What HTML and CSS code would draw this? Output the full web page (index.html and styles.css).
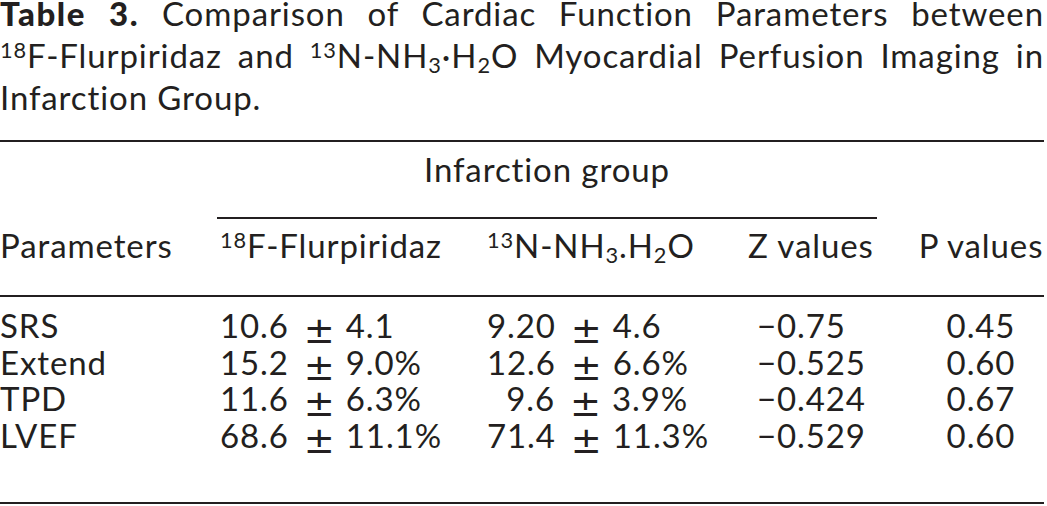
FILE: index.html
```html
<!DOCTYPE html>
<html lang="en">
<head>
    <meta charset="UTF-8" />
    <title>Table 3</title>
    <link rel="stylesheet" href="styles.css">
</head>
<body>
    <p class="caption"><b>Table 3.</b> Comparison of Cardiac Function Parameters between <span class="nowrap"><sup>18</sup>F-Flurpiridaz</span> and <span class="nowrap"><sup>13</sup>N-NH<sub>3</sub>·H<sub>2</sub>O</span> Myocardial Perfusion Imaging in Infarction Group.</p>

    <table class="data-table">
        <colgroup>
            <col class="col-param">
            <col class="col-f18">
            <col class="col-n13">
            <col class="col-z">
            <col class="col-p">
        </colgroup>
        <thead>
            <tr class="group-row">
                <th></th>
                <th colspan="3" class="group-head"><div class="group-label">Infarction group</div></th>
                <th></th>
            </tr>
            <tr class="head-row">
                <th>Parameters</th>
                <th><sup>18</sup>F-Flurpiridaz</th>
                <th><sup>13</sup>N-NH<sub>3</sub>.H<sub>2</sub>O</th>
                <th>Z values</th>
                <th class="center">P values</th>
            </tr>
        </thead>
        <tbody>
            <tr class="first">
                <td>SRS</td>
                <td><span class="mean">10.6</span><span class="pm">±</span>4.1</td>
                <td><span class="mean">9.20</span><span class="pm">±</span>4.6</td>
                <td class="z">−0.75</td>
                <td class="center">0.45</td>
            </tr>
            <tr>
                <td>Extend</td>
                <td><span class="mean">15.2</span><span class="pm">±</span>9.0%</td>
                <td><span class="mean">12.6</span><span class="pm">±</span>6.6%</td>
                <td class="z">−0.525</td>
                <td class="center">0.60</td>
            </tr>
            <tr>
                <td>TPD</td>
                <td><span class="mean">11.6</span><span class="pm">±</span>6.3%</td>
                <td><span class="mean">9.6</span><span class="pm">±</span>3.9%</td>
                <td class="z">−0.424</td>
                <td class="center">0.67</td>
            </tr>
            <tr class="last">
                <td>LVEF</td>
                <td><span class="mean">68.6</span><span class="pm">±</span>11.1%</td>
                <td><span class="mean">71.4</span><span class="pm">±</span>11.3%</td>
                <td class="z">−0.529</td>
                <td class="center">0.60</td>
            </tr>
        </tbody>
    </table>
</body>
</html>
```

FILE: styles.css
```css
body {
    margin: 0;
    width: 1044px;
    background: #fff;
    color: #231f20;
    font-family: "Lato", "Open Sans", sans-serif;
    font-size: 33px;
    letter-spacing: 0.9px;
}

.caption {
    margin: -8px 0 0;
    line-height: 42px;
    text-align: justify;
}

.caption b {
    font-weight: 900;
    letter-spacing: 1.6px;
}

.nowrap {
    white-space: nowrap;
}

sup,
sub {
    font-size: 0.66em;
    line-height: 0;
}

sup {
    vertical-align: 0.48em;
}

sub {
    vertical-align: -0.25em;
}

.data-table {
    width: 1044px;
    margin-top: 22px;
    border-collapse: collapse;
    border-top: 2px solid #231f20;
    border-bottom: 2px solid #231f20;
}

.col-param { width: 220px; }
.col-f18 { width: 267px; }
.col-n13 { width: 261px; }
.col-z { width: 170px; }
.col-p { width: 126px; }

th,
td {
    padding: 0;
    font-weight: normal;
    text-align: left;
    white-space: nowrap;
}

thead th {
    line-height: 40px;
}

.group-row th {
    padding: 7px 0 30px;
}

.group-row th.group-head {
    padding: 0;
    text-align: center;
}

.group-label {
    margin: 0 41px 0 -3px;
    padding: 7px 0 28px;
    border-bottom: 2px solid #231f20;
}

.head-row th {
    padding: 6px 0 30px;
    border-bottom: 2px solid #231f20;
}

th.center,
td.center {
    text-align: center;
}

tbody td {
    line-height: 36.7px;
}

tbody tr.first td {
    padding-top: 10px;
}

tbody tr.last td {
    padding-bottom: 48px;
}

.mean {
    display: inline-block;
    min-width: 68px;
    text-align: right;
}

.pm {
    display: inline-block;
    margin: 0 11px 0 15px;
    font-family: "DejaVu Sans", sans-serif;
    font-size: 37px;
    letter-spacing: 0;
    vertical-align: -5px;
    line-height: 0;
}

td.z {
    padding-left: 9px;
}
```
